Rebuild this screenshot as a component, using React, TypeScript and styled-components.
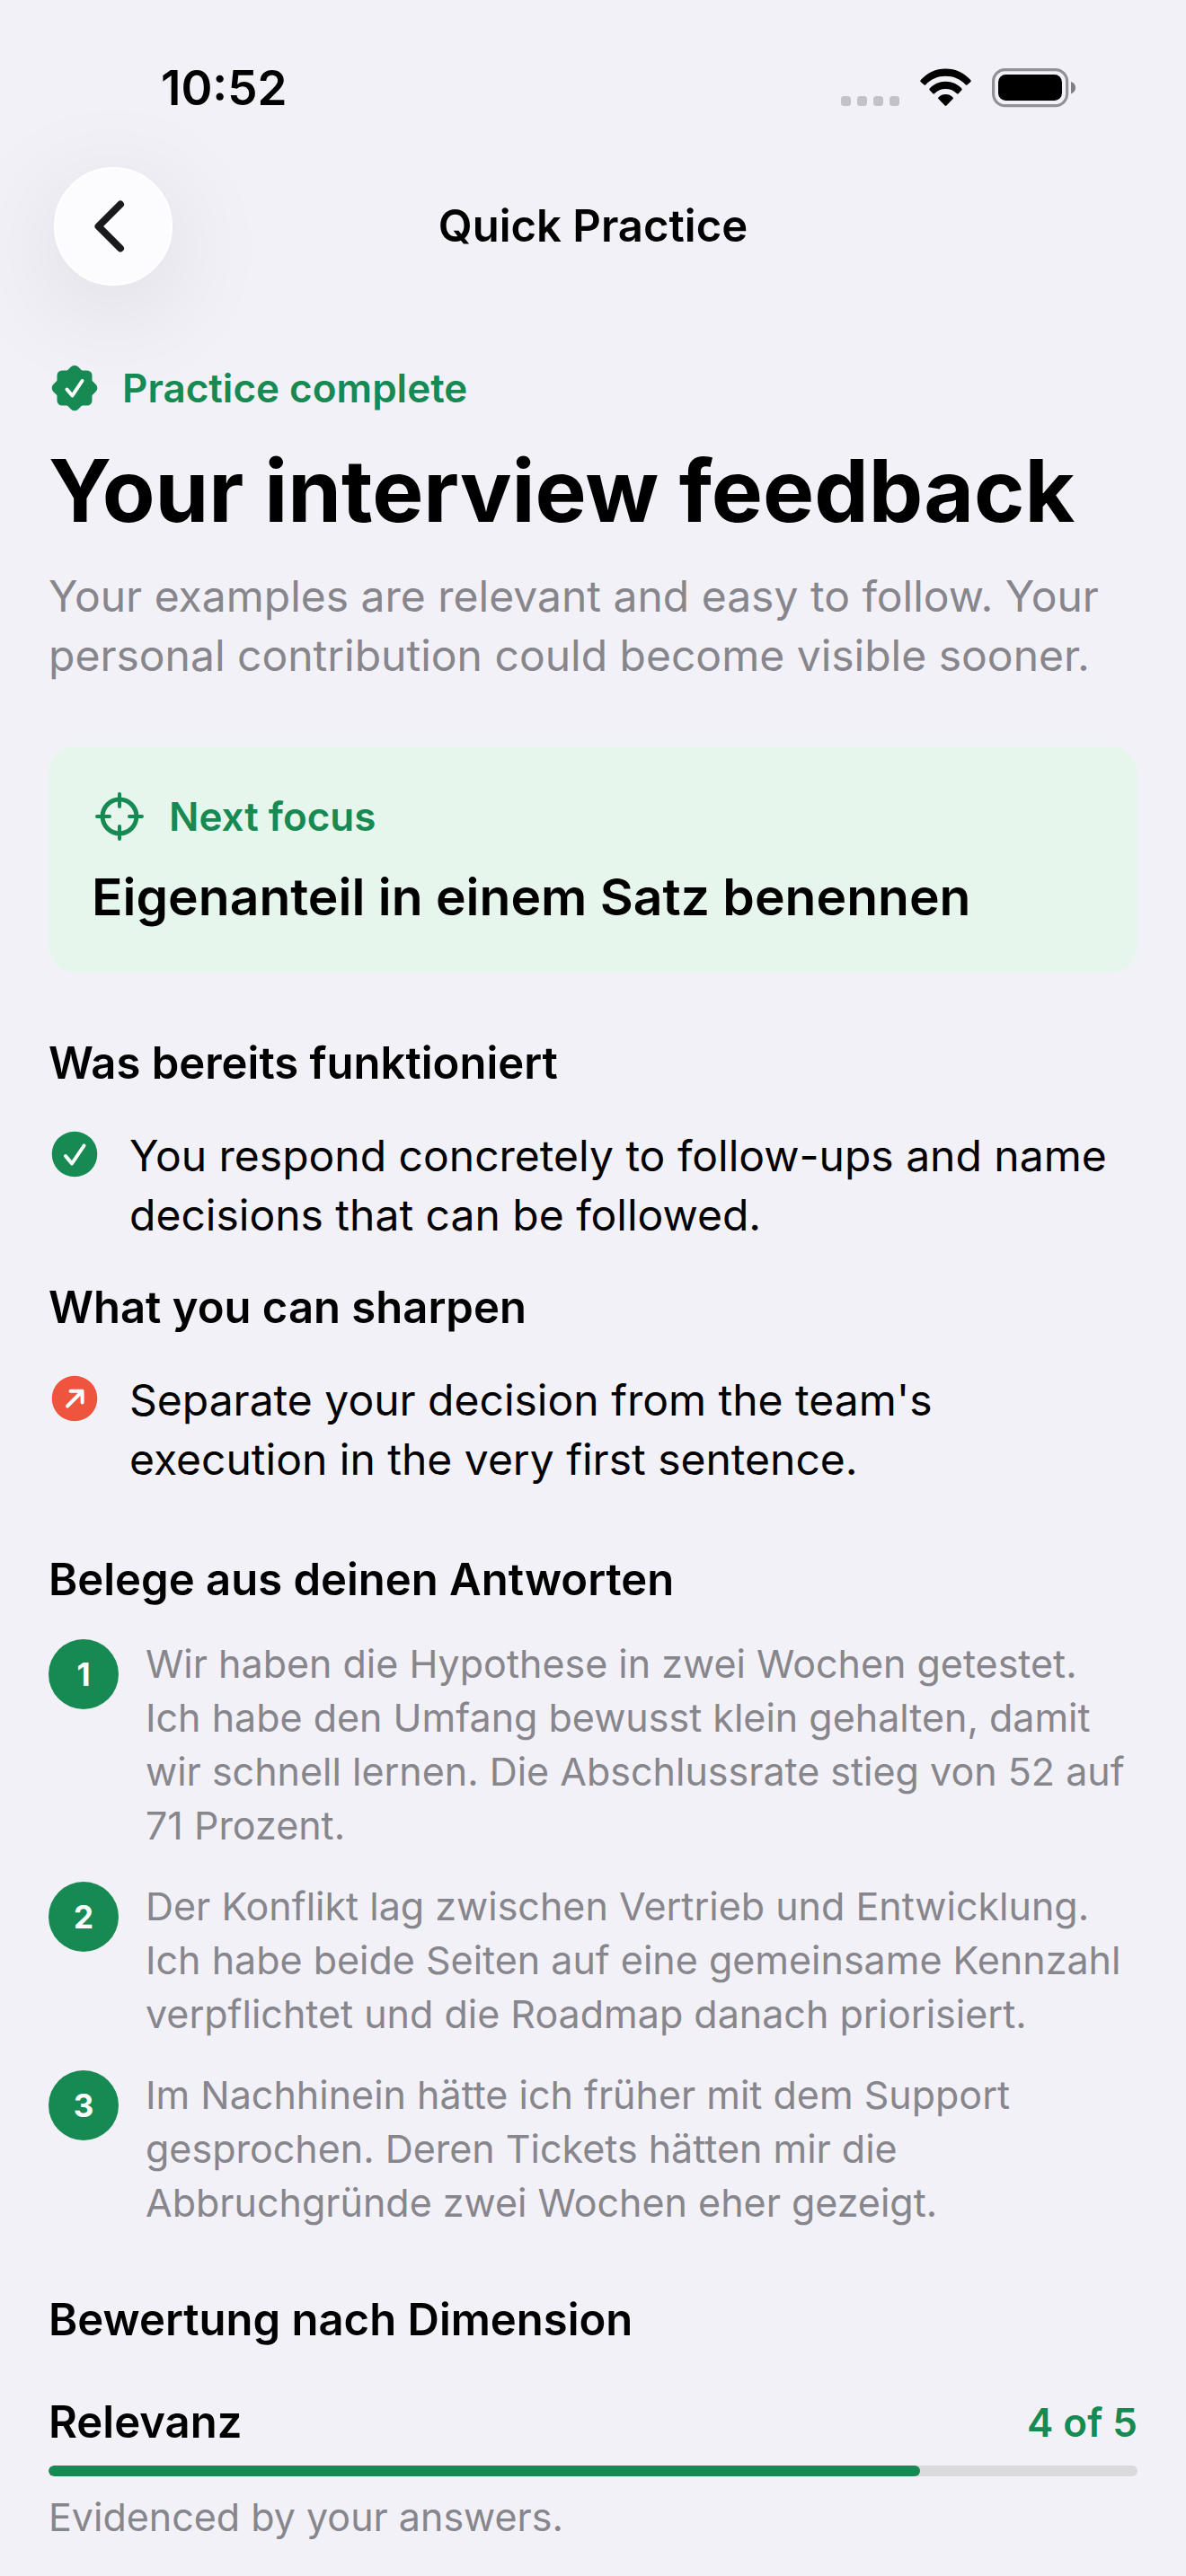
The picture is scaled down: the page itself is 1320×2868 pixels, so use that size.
import React from "react";
import styled, { createGlobalStyle } from "styled-components";

const color = {
  page: "#f2f1f7",
  ink: "#000000",
  muted: "#87868c",
  green: "#168a52",
  mint: "#e6f6ec",
  coral: "#ef553e",
  track: "#dad9de",
};

const GlobalStyle = createGlobalStyle`
  *, *::before, *::after { box-sizing: border-box; }
  html { background: ${color.page}; }
  body {
    margin: 0;
    background: ${color.page};
    color: ${color.ink};
    font-family: Inter, "Liberation Sans", sans-serif;
    font-size: 48px;
    line-height: 66px;
  }
  h1, h2, p, ul, ol { margin: 0; padding: 0; font-weight: inherit; font-size: inherit; }
  ul, ol { list-style: none; }
  svg { display: block; flex: none; }
`;

const StatusBar = styled.div`
  display: flex;
  align-items: center;
  justify-content: space-between;
  padding: 65px 121px 55px 179px;
`;

const Clock = styled.time`
  font-size: 53px;
  font-weight: 600;
`;

const Indicators = styled.div`
  display: flex;
  align-items: center;
  gap: 23px;
`;

const NavBar = styled.header`
  display: grid;
  grid-template-columns: 132px 1fr 132px;
  align-items: center;
  padding: 0 60px;
`;

const BackButton = styled.button`
  display: grid;
  place-items: center;
  width: 132px;
  height: 132px;
  padding: 0 8px 0 0;
  border: 2px solid #ffffff;
  border-radius: 50%;
  background: #fcfcfe;
  box-shadow: 0 24px 120px rgba(0, 0, 0, 0.1);
`;

const NavTitle = styled.p`
  text-align: center;
  font-size: 49px;
  font-weight: 600;
`;

const Content = styled.main`
  display: flex;
  flex-direction: column;
  gap: 68px;
  padding: 84px 54px 36px;
`;

const Stack = styled.section<{ $gap: number }>`
  display: flex;
  flex-direction: column;
  gap: ${({ $gap }) => $gap}px;
`;

const Label = styled.p`
  display: flex;
  align-items: center;
  gap: 24px;
  color: ${color.green};
  font-size: 44px;
  line-height: 60px;
  font-weight: 600;
`;

const PageTitle = styled.h1`
  && { font-size: 96px; font-weight: 700; }
  line-height: 121px;
`;

const Summary = styled.p`
  color: ${color.muted};
`;

const FocusCard = styled(Stack)`
  padding: 48px;
  border-radius: 30px;
  background: ${color.mint};
`;

const FocusTitle = styled.h2`
  && { font-size: 57px; font-weight: 600; }
  line-height: 72px;
`;

const Heading = styled.h2`
  && { font-size: 49px; font-weight: 600; }
`;

const PointList = styled.ul``;

const Point = styled.li`
  display: flex;
  align-items: flex-start;
  gap: 32px;
`;

const PointIcon = styled.span`
  display: grid;
  place-items: center;
  flex: none;
  width: 58px;
  height: 62px;
`;

const EvidenceList = styled.ol`
  display: flex;
  flex-direction: column;
  gap: 30px;
`;

const Evidence = styled.li`
  display: flex;
  align-items: flex-start;
  gap: 30px;
  color: ${color.muted};
  font-size: 43px;
  line-height: 60px;
`;

const Step = styled.span`
  display: grid;
  place-items: center;
  flex: none;
  width: 78px;
  height: 78px;
  margin-top: 3px;
  border-radius: 50%;
  background: ${color.green};
  color: #ffffff;
  font-size: 35px;
  font-weight: 700;
`;

const Dimension = styled.div`
  display: flex;
  flex-direction: column;
  gap: 15px;
`;

const DimensionHead = styled.div`
  display: flex;
  align-items: center;
  justify-content: space-between;
  font-size: 49px;
  font-weight: 600;
`;

const Score = styled.span`
  color: ${color.green};
  font-size: 44px;
`;

const Track = styled.div`
  height: 12px;
  border-radius: 6px;
  background: ${color.track};
  overflow: hidden;
`;

const Fill = styled.div`
  height: 100%;
  border-radius: 6px;
  background: ${color.green};
`;

const Note = styled.p`
  color: ${color.muted};
  font-size: 43px;
  line-height: 60px;
`;

const SignalDots = () => (
  <svg width="65" height="44" viewBox="0 0 65 44" aria-hidden="true">
    {[0, 18, 36, 54].map((x) => (
      <rect key={x} x={x} y="31" width="11" height="11" rx="3.5" fill="#c3c2c8" />
    ))}
  </svg>
);

const Wifi = () => (
  <svg width="57" height="44" viewBox="0 0 57 44" aria-hidden="true">
    <path d="M0.8 13.1C8 5 17.5 0.6 28.5 0.6S49 5 56.2 13.1Q57.2 14.2 56.2 15.2L52.4 18.6Q51.6 19.2 50.8 18.4C44.8 12 37.2 8.8 28.5 8.8S12.2 12 6.2 18.4Q5.4 19.2 4.6 18.6L0.8 15.2Q-0.2 14.2 0.8 13.1Z" />
    <path d="M10.7 22.6C15.2 17.7 21.3 14.8 28.5 14.8S41.8 17.7 46.3 22.6Q47.2 23.6 46.2 24.6L42.6 28.2Q41.8 29 41 28.2C37.6 24.9 33.5 23.1 28.5 23.1S19.4 24.9 16 28.2Q15.2 29 14.4 28.2L10.8 24.6Q9.8 23.6 10.7 22.6Z" />
    <path d="M20.4 32.4C22.6 30.2 25.2 29 28.5 29S34.4 30.2 36.6 32.4Q37.4 33.2 36.6 34.1L29.4 41.6Q28.5 42.4 27.6 41.6L20.4 34.1Q19.6 33.2 20.4 32.4Z" />
  </svg>
);

const Battery = () => (
  <svg width="95" height="44" viewBox="0 0 95 44" aria-hidden="true">
    <rect x="1.6" y="1.6" width="82" height="40" rx="13" fill="none" stroke="#929197" strokeWidth="3.2" />
    <rect x="7" y="7" width="71" height="29" rx="8.5" />
    <path d="M88 15Q93 16.5 93 21.6T88 28.4Z" fill="#807f85" />
  </svg>
);

const Chevron = () => (
  <svg width="34" height="58" viewBox="0 0 34 58" fill="none" aria-hidden="true">
    <path d="M29 4.500 4.500 29 29 53.500" stroke="#1a1a1c" strokeWidth="8" strokeLinecap="round" strokeLinejoin="round" />
  </svg>
);

const Seal = () => (
  <svg width="58" height="58" viewBox="-29 -29 58 58" aria-hidden="true">
    <rect x="-19.5" y="-19.5" width="39" height="39" rx="5.5" fill={color.green} />
    <rect x="-19.5" y="-19.5" width="39" height="39" rx="5.5" fill={color.green} transform="rotate(45)" />
    <path d="M-8.500 1.500-2.500 8.500 8.500-8" fill="none" stroke="#fff" strokeWidth="4" strokeLinecap="round" strokeLinejoin="round" />
  </svg>
);

const Scope = () => (
  <svg width="62" height="58" viewBox="-31 -29 62 58" fill="none" stroke={color.green} aria-hidden="true">
    <circle r="18.9" strokeWidth="5" />
    <path d="M0-25V-11M0 25V11M-25 0H-11M25 0H11" strokeWidth="4" strokeLinecap="round" />
  </svg>
);

const CheckDisc = () => (
  <svg width="58" height="58" viewBox="-29 -29 58 58" fill="none" aria-hidden="true">
    <circle r="25.3" fill={color.green} />
    <path d="M-10 2-3 10.500 10.500-9.500" stroke="#fff" strokeWidth="4" strokeLinecap="round" strokeLinejoin="round" />
  </svg>
);

const ArrowDisc = () => (
  <svg width="58" height="58" viewBox="-29 -29 58 58" fill="none" aria-hidden="true">
    <circle r="25.3" fill={color.coral} />
    <path d="M-8 8.500 8.500-8M-4.500-8.300H8.600V4.500" stroke="#fff" strokeWidth="4" strokeLinecap="round" strokeLinejoin="round" />
  </svg>
);

const evidence = [
  "Wir haben die Hypothese in zwei Wochen getestet. Ich habe den Umfang bewusst klein gehalten, damit wir schnell lernen. Die Abschlussrate stieg von 52 auf 71 Prozent.",
  "Der Konflikt lag zwischen Vertrieb und Entwicklung. Ich habe beide Seiten auf eine gemeinsame Kennzahl verpflichtet und die Roadmap danach priorisiert.",
  "Im Nachhinein hätte ich früher mit dem Support gesprochen. Deren Tickets hätten mir die Abbruchgründe zwei Wochen eher gezeigt.",
];

const dimensions = [
  { name: "Relevanz", score: 4, max: 5, note: "Evidenced by your answers." },
];

export default function App() {
  return (
    <>
      <GlobalStyle />
      <StatusBar>
        <Clock>10:52</Clock>
        <Indicators>
          <SignalDots />
          <Wifi />
          <Battery />
        </Indicators>
      </StatusBar>
      <NavBar>
        <BackButton type="button" aria-label="Back">
          <Chevron />
        </BackButton>
        <NavTitle>Quick Practice</NavTitle>
      </NavBar>
      <Content>
        <Stack $gap={24}>
          <Label>
            <Seal />
            Practice complete
          </Label>
          <PageTitle>Your interview feedback</PageTitle>
          <Summary>
            Your examples are relevant and easy to follow. Your personal contribution could become visible sooner.
          </Summary>
        </Stack>
        <FocusCard $gap={24}>
          <Label>
            <Scope />
            Next focus
          </Label>
          <FocusTitle>Eigenanteil in einem Satz benennen</FocusTitle>
        </FocusCard>
        <Stack $gap={37}>
          <Heading>Was bereits funktioniert</Heading>
          <PointList>
            <Point>
              <PointIcon>
                <CheckDisc />
              </PointIcon>
              <p>You respond concretely to follow-ups and name decisions that can be followed.</p>
            </Point>
          </PointList>
          <Heading>What you can sharpen</Heading>
          <PointList>
            <Point>
              <PointIcon>
                <ArrowDisc />
              </PointIcon>
              <p>Separate your decision from the team's execution in the very first sentence.</p>
            </Point>
          </PointList>
        </Stack>
        <Stack $gap={30}>
          <Heading>Belege aus deinen Antworten</Heading>
          <EvidenceList>
            {evidence.map((text, i) => (
              <Evidence key={text}>
                <Step>{i + 1}</Step>
                <p>{text}</p>
              </Evidence>
            ))}
          </EvidenceList>
        </Stack>
        <Stack $gap={48}>
          <Heading>Bewertung nach Dimension</Heading>
          {dimensions.map((d) => (
            <Dimension key={d.name}>
              <DimensionHead>
                <span>{d.name}</span>
                <Score>
                  {d.score} of {d.max}
                </Score>
              </DimensionHead>
              <Track role="progressbar" aria-label={d.name} aria-valuemin={0} aria-valuemax={d.max} aria-valuenow={d.score}>
                <Fill style={{ width: `${(d.score / d.max) * 100}%` }} />
              </Track>
              <Note>{d.note}</Note>
            </Dimension>
          ))}
        </Stack>
      </Content>
    </>
  );
}
